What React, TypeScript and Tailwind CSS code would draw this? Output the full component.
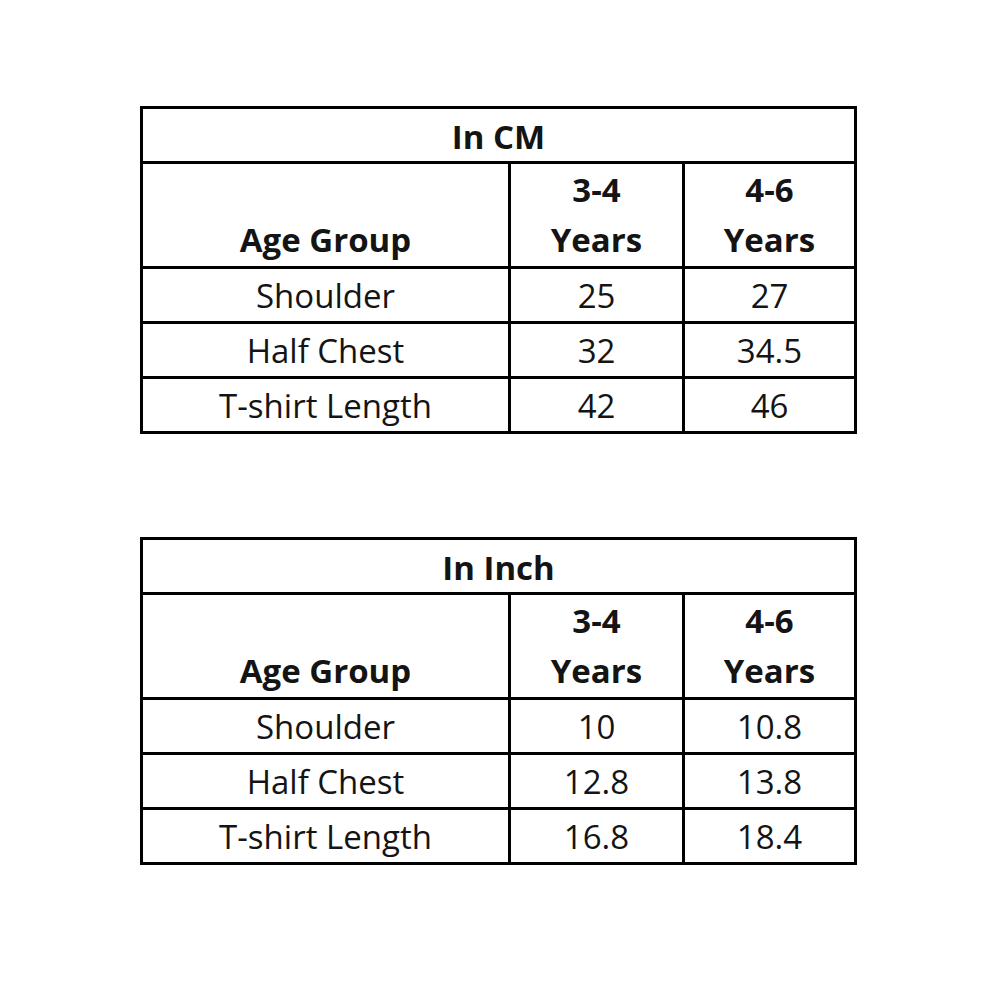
import React from 'react';

type Row = { label: string; a: string; b: string };

const cmRows: Row[] = [
  { label: 'Shoulder', a: '25', b: '27' },
  { label: 'Half Chest', a: '32', b: '34.5' },
  { label: 'T-shirt Length', a: '42', b: '46' },
];

const inchRows: Row[] = [
  { label: 'Shoulder', a: '10', b: '10.8' },
  { label: 'Half Chest', a: '12.8', b: '13.8' },
  { label: 'T-shirt Length', a: '16.8', b: '18.4' },
];

function SizeTable({ title, rows }: { title: string; rows: Row[] }) {
  return (
    <div className="w-[717px] border-[3px] border-black bg-white">
      <div className="h-[55px] border-b-[3px] border-black flex items-center justify-center pt-[3px] font-bold">
        {title}
      </div>
      <div className="grid grid-cols-[368px_174px_169px] border-b-[3px] border-black">
        <div className="h-[102px] border-r-[3px] border-black flex items-end justify-center pb-[10px] font-bold">
          Age Group
        </div>
        {['3-4', '4-6'].map((range, i) => (
          <div
            key={range}
            className={`h-[102px] flex flex-col items-center font-bold ${i === 0 ? 'border-r-[3px] border-black' : ''}`}
          >
            <div className="h-[51px] flex items-center">{range}</div>
            <div className="h-[51px] flex items-center pb-[2px]">Years</div>
          </div>
        ))}
      </div>
      {rows.map((r, idx) => (
        <div
          key={r.label}
          className={`grid grid-cols-[368px_174px_169px] ${idx < rows.length - 1 ? 'border-b-[3px] border-black' : ''}`}
        >
          <div className="h-[52px] border-r-[3px] border-black flex items-center justify-center">{r.label}</div>
          <div className="h-[52px] border-r-[3px] border-black flex items-center justify-center">{r.a}</div>
          <div className="h-[52px] flex items-center justify-center">{r.b}</div>
        </div>
      ))}
    </div>
  );
}

export default function App() {
  return (
    <div
      className="w-[1000px] h-[1000px] bg-white text-[#141414] text-[33px] leading-none flex flex-col items-center pt-[106px] gap-[103px]"
      style={{ fontFamily: '"Open Sans", Lato, sans-serif' }}
    >
      <div className="ml-[-3px]">
        <SizeTable title="In CM" rows={cmRows} />
      </div>
      <div className="ml-[-3px]">
        <SizeTable title="In Inch" rows={inchRows} />
      </div>
    </div>
  );
}
